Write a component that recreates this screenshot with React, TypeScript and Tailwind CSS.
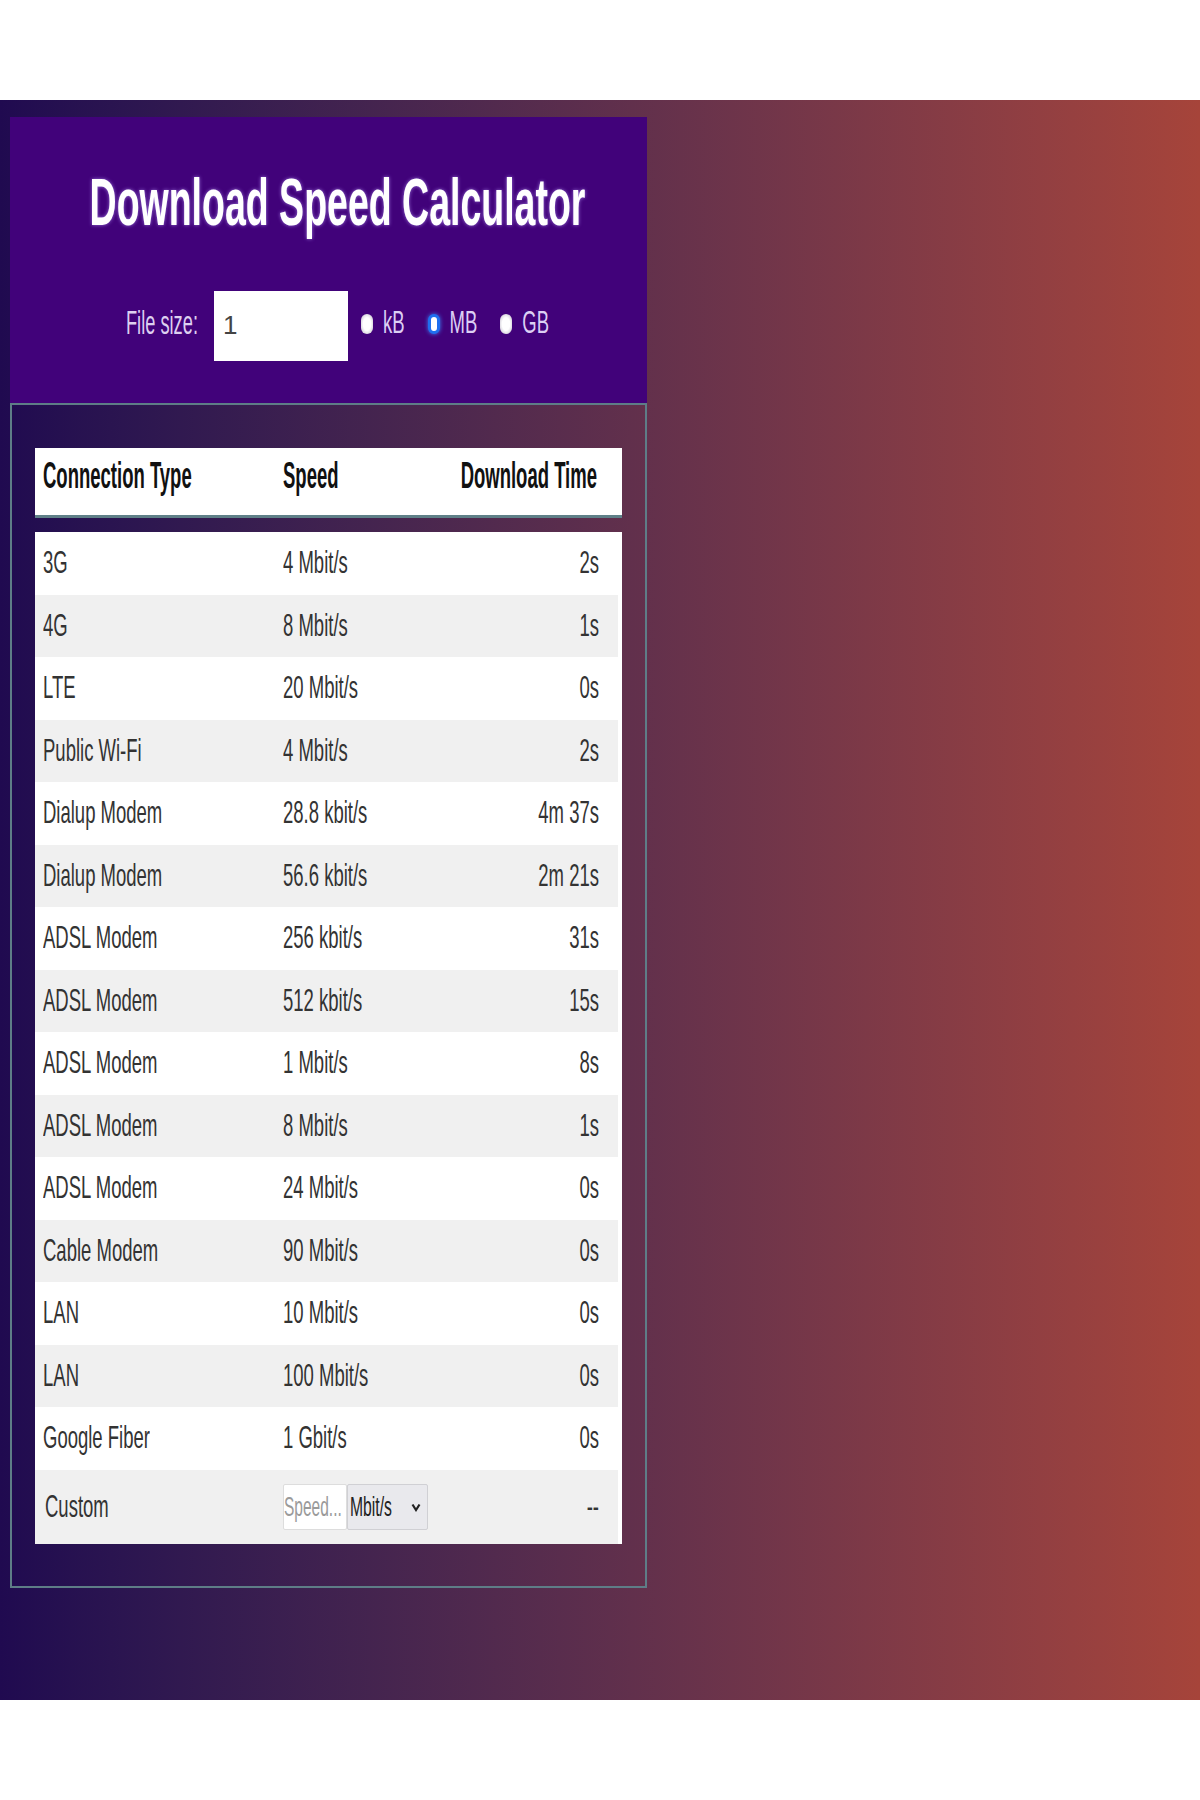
import React from "react";

const rows = [
  { type: "3G", speed: "4 Mbit/s", time: "2s" },
  { type: "4G", speed: "8 Mbit/s", time: "1s" },
  { type: "LTE", speed: "20 Mbit/s", time: "0s" },
  { type: "Public Wi-Fi", speed: "4 Mbit/s", time: "2s" },
  { type: "Dialup Modem", speed: "28.8 kbit/s", time: "4m 37s" },
  { type: "Dialup Modem", speed: "56.6 kbit/s", time: "2m 21s" },
  { type: "ADSL Modem", speed: "256 kbit/s", time: "31s" },
  { type: "ADSL Modem", speed: "512 kbit/s", time: "15s" },
  { type: "ADSL Modem", speed: "1 Mbit/s", time: "8s" },
  { type: "ADSL Modem", speed: "8 Mbit/s", time: "1s" },
  { type: "ADSL Modem", speed: "24 Mbit/s", time: "0s" },
  { type: "Cable Modem", speed: "90 Mbit/s", time: "0s" },
  { type: "LAN", speed: "10 Mbit/s", time: "0s" },
  { type: "LAN", speed: "100 Mbit/s", time: "0s" },
  { type: "Google Fiber", speed: "1 Gbit/s", time: "0s" },
];

// text in the shot is stretched tall, so each label gets a vertical scale
function Tall({ children, className = "" }: { children: React.ReactNode; className?: string }) {
  return <span className={`inline-block leading-none whitespace-nowrap ${className}`}>{children}</span>;
}

function Radio({ label, checked }: { label: string; checked?: boolean }) {
  return (
    <div className="flex items-center">
      {checked ? (
        <span className="w-[12px] h-[20px] rounded-full border-[3px] border-[#1f6ff0] bg-white shadow-[0_0_4px_#3b82f6]" />
      ) : (
        <span className="w-[12px] h-[20px] rounded-full bg-[radial-gradient(ellipse_at_center,#ffffff_45%,#b9b2c4_100%)]" />
      )}
      <Tall className="ml-[10px] text-[18.5px] text-[#dccff4] scale-y-[1.7]">{label}</Tall>
    </div>
  );
}

export default function App() {
  return (
    <div className="w-[1200px] min-h-[1800px] bg-white [font-family:'Liberation_Sans',Arial,sans-serif]">
      <div className="h-[100px]" />
      <div className="h-[1600px] bg-linear-to-r from-[#200a50] to-[#a6443a] pt-[17px] px-[10px]">
        <div className="w-[637px]">
          {/* Header */}
          <div className="h-[286px] bg-[#41027a] pt-[68px] pl-[18px] flex flex-col items-center">
            <h1 className="text-[37.5px] font-bold text-white leading-none">
              <Tall className="scale-y-[1.77] [text-shadow:0_0_3px_rgba(190,160,255,0.7)]">
                Download Speed Calculator
              </Tall>
            </h1>
            <div className="mt-[68px] h-[70px] flex items-center">
              <Tall className="mb-[4px] text-[18.25px] text-[#ddd0f0] scale-y-[1.8]">File size:</Tall>
              <input
                readOnly
                value="1"
                className="ml-[16px] w-[134px] h-[70px] bg-white pl-[9px] text-[26px] text-[#444] outline-none"
              />
              <div className="ml-[13px] mb-[4px] flex items-center gap-[23px]">
                <Radio label="kB" />
                <Radio label="MB" checked />
                <Radio label="GB" />
              </div>
            </div>
          </div>

          {/* Table */}
          <div className="border-2 border-[#5e7d87] pt-[43px] px-[23px] pb-[42px]">
            <div className="h-[70px] bg-white border-b-[3px] border-[#5f8088] flex items-start pt-[14px] text-[18.5px] font-bold text-[#111]">
              <div className="w-[248px] pl-[8px]">
                <Tall className="scale-y-[2]">Connection Type</Tall>
              </div>
              <div className="flex-1">
                <Tall className="scale-y-[2]">Speed</Tall>
              </div>
              <div className="pr-[25px] text-right">
                <Tall className="scale-y-[2]">Download Time</Tall>
              </div>
            </div>

            <div className="mt-[14px] bg-white pr-[4px] text-[18.5px] text-[#333]">
              {rows.map((r, i) => (
                <div
                  key={i}
                  className={`h-[62.5px] flex items-center ${i % 2 === 1 ? "bg-[#f0f0f0]" : "bg-white"}`}
                >
                  <div className="w-[248px] pl-[8px]">
                    <Tall className="scale-y-[1.65]">{r.type}</Tall>
                  </div>
                  <div className="flex-1">
                    <Tall className="scale-y-[1.65]">{r.speed}</Tall>
                  </div>
                  <div className="pr-[19px] text-right">
                    <Tall className="scale-y-[1.65]">{r.time}</Tall>
                  </div>
                </div>
              ))}

              <div className="h-[74px] flex items-center bg-[#f0f0f0]">
                <div className="w-[248px] pl-[10px]">
                  <Tall className="scale-y-[1.65]">Custom</Tall>
                </div>
                <div className="flex-1 flex items-center">
                  <div className="w-[64px] h-[46px] bg-white border border-[#dddddd] rounded-[2px] flex items-center">
                    <Tall className="text-[15.5px] text-[#9a9a9a] scale-y-[1.8]">Speed...</Tall>
                  </div>
                  <div className="w-[81px] h-[46px] bg-[#e9e9ed] border border-[#d0d0d4] rounded-[2px] flex items-center pl-[2px] pr-[6px]">
                    <Tall className="text-[15.7px] text-[#222] scale-y-[1.8]">Mbit/s</Tall>
                    <svg className="ml-auto" width="10" height="10" viewBox="0 0 10 10">
                      <path d="M1.5 2.5 L5 8 L8.5 2.5" fill="none" stroke="#222" strokeWidth="2.2" />
                    </svg>
                  </div>
                </div>
                <div className="pr-[19px] text-right">
                  <Tall className="scale-y-[1.65]">--</Tall>
                </div>
              </div>
            </div>
          </div>
        </div>
      </div>
      <div className="h-[100px]" />
    </div>
  );
}
